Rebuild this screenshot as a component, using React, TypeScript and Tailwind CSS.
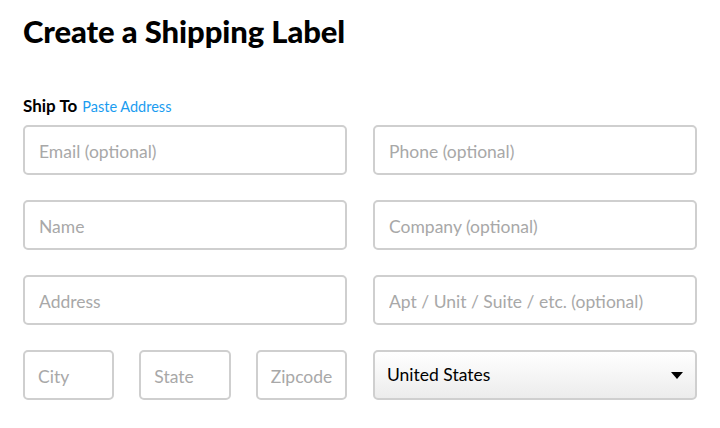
import React from "react";

const inputCls =
  "h-[50px] w-full rounded-[5px] border-2 border-[#cfcfcf] bg-white pt-[3px] text-[17.5px] text-[#333] placeholder:text-[#a8a8a8] outline-none";

function Field({ placeholder, small }: { placeholder: string; small?: boolean }) {
  return (
    <input
      type="text"
      placeholder={placeholder}
      className={`${inputCls} ${small ? "pl-[13px] pr-0" : "px-[14px]"}`}
    />
  );
}

export default function App() {
  return (
    <div
      className="min-h-screen w-[720px] bg-white pl-[23px] pr-[23px]"
      style={{ fontFamily: "Lato, 'Noto Sans', sans-serif" }}
    >
      <h1 className="pt-[13px] text-[31px] font-black leading-[36px] tracking-[-0.1px] text-black">
        Create a Shipping Label
      </h1>

      <div className="mt-[44px] flex items-baseline gap-[5px]">
        <span className="text-[17px] font-bold text-black">Ship To</span>
        <a className="cursor-pointer text-[14.5px] text-[#1a9cf0]">Paste Address</a>
      </div>

      <div className="mt-[6px] grid grid-cols-2 gap-x-[26px] gap-y-[25px]">
        <Field placeholder="Email (optional)" />
        <Field placeholder="Phone (optional)" />
        <Field placeholder="Name" />
        <Field placeholder="Company (optional)" />
        <Field placeholder="Address" />
        <Field placeholder="Apt / Unit / Suite / etc. (optional)" />
        <div className="grid grid-cols-3 gap-x-[25px]">
          <Field placeholder="City" small />
          <Field placeholder="State" small />
          <Field placeholder="Zipcode" small />
        </div>
        <div className="flex h-[50px] items-center justify-between rounded-[5px] border-2 border-[#cfcfcf] bg-gradient-to-b from-white to-[#ececec] pl-[12px] pr-[12px] pt-[2px]">
          <span className="text-[17.5px] text-black">United States</span>
          <svg width="12" height="7" viewBox="0 0 12 7">
            <path d="M0 0 H12 L6 7 Z" fill="#000" />
          </svg>
        </div>
      </div>
    </div>
  );
}
